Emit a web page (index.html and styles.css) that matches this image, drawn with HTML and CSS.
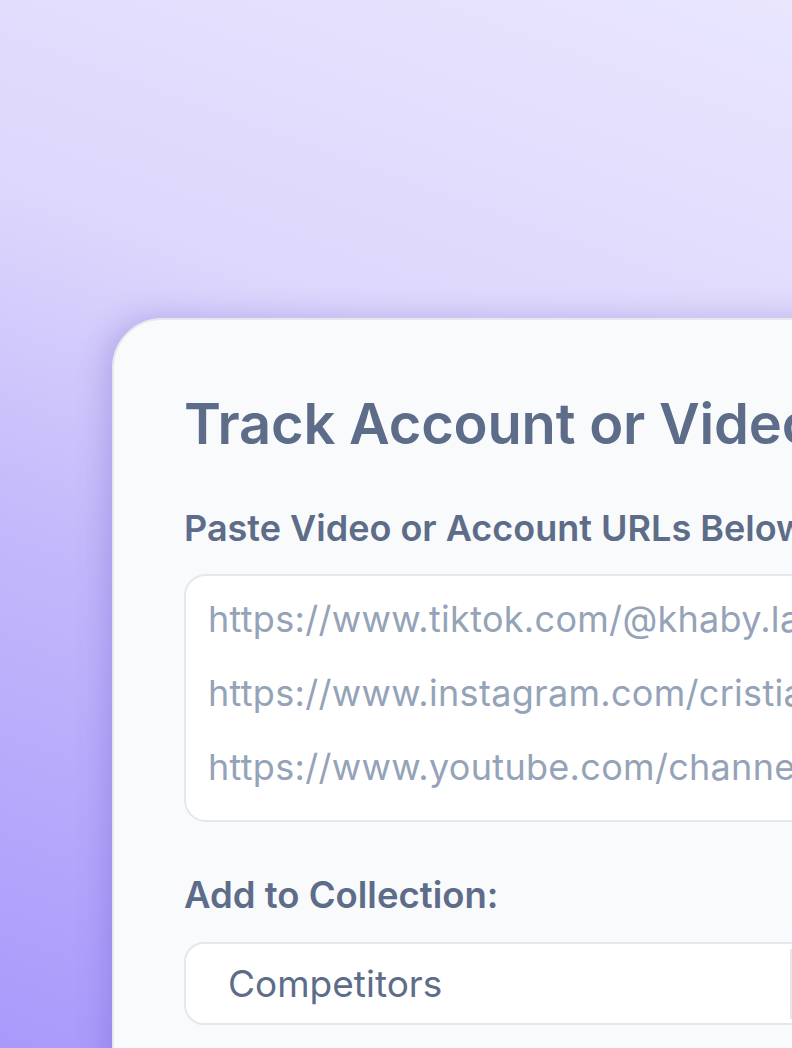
FILE: index.html
```html
<!DOCTYPE html>
<html lang="en">
<head>
  <meta charset="UTF-8">
  <meta name="viewport" content="width=device-width, initial-scale=1.0">
  <title>Track Account or Video</title>
  <link rel="stylesheet" href="styles.css">
</head>
<body>

  <div class="card">
    <h1 class="card-title">Track Account or Video</h1>

    <p class="field-label">Paste Video or Account URLs Below</p>
    <div class="url-box">
      <p class="url-line">https://www.tiktok.com/@khaby.lame</p>
      <p class="url-line">https://www.instagram.com/cristiano</p>
      <p class="url-line">https://www.youtube.com/channel/UC</p>
    </div>

    <p class="field-label collection-label">Add to Collection:</p>
    <div class="select-box">
      <span class="select-value">Competitors</span>
      <span class="select-divider"></span>
    </div>
  </div>

</body>
</html>
```

FILE: styles.css
```css
html, body, h1, p {
  margin: 0;
  padding: 0;
}

body {
  height: 1048px;
  overflow: hidden;
  font-family: Inter, "Noto Sans", sans-serif;
  background: linear-gradient(200deg, #e9e6fe 0%, #ddd7fc 35%, #c4b9fb 60%, #a999fb 100%);
}

.card {
  width: 1000px;
  margin: 318px 0 0 112px;
  padding: 70px 0 0 70px;
  height: 900px;
  box-sizing: border-box;
  background: #f8fafc;
  border: 2px solid #e6e8ef;
  border-radius: 50px;
  box-shadow: -6px 0 30px rgba(90, 70, 190, 0.28);
}

.card-title {
  font-size: 56px;
  font-weight: 600;
  line-height: 68px;
  color: #5d6c88;
  letter-spacing: -0.2px;
}

.field-label {
  font-size: 36px;
  font-weight: 600;
  line-height: 44px;
  color: #5d6c88;
  margin-top: 48px;
}

.url-box {
  margin-top: 24px;
  height: 248px;
  box-sizing: border-box;
  padding: 6px 22px;
  background: #fff;
  border: 2px solid #e3e7ee;
  border-radius: 22px;
}

.url-line {
  font-size: 36px;
  line-height: 74px;
  letter-spacing: 0.3px;
  color: #94a3b8;
  white-space: nowrap;
}

.collection-label {
  font-size: 36.5px;
  margin-top: 51px;
}

.select-box {
  margin-top: 25px;
  height: 83px;
  box-sizing: border-box;
  padding: 0 0 0 42px;
  display: flex;
  align-items: center;
  background: #fff;
  border: 2px solid #e3e7ee;
  border-radius: 20px;
}

.select-value {
  font-size: 37px;
  color: #5d6c88;
  width: 562px;
}

.select-divider {
  width: 2px;
  height: 70px;
  background: #e3e7ee;
}
```
